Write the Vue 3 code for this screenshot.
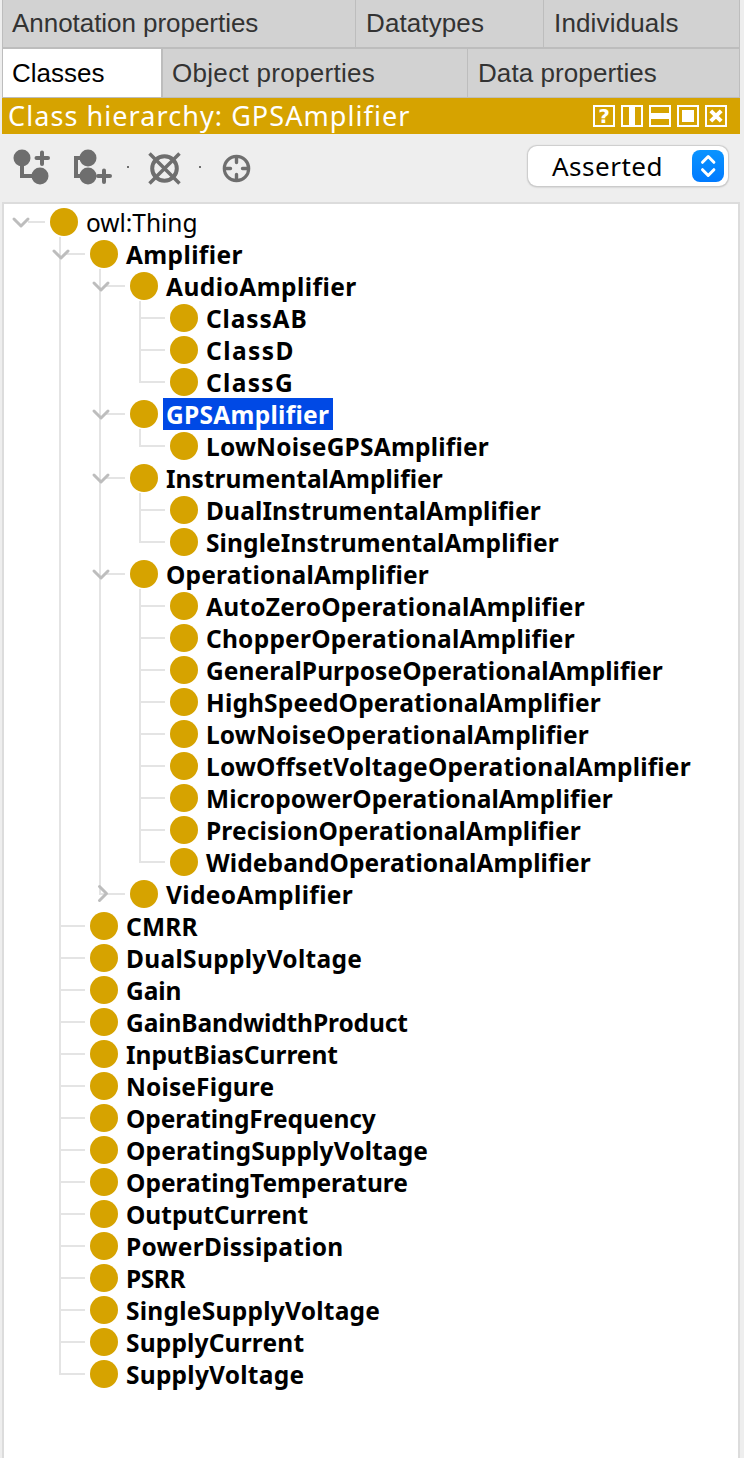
<script setup>
const canvas = document.createElement('canvas').getContext('2d')

// Letter spacing that lets a text's ink end `width` px after its origin.
function fit(text, font, width) {
  canvas.font = font
  canvas.letterSpacing = '0.01px'
  const ink = canvas.measureText(text).actualBoundingBoxRight
  return { letterSpacing: ((width - ink) / (text.length - 1)).toFixed(3) + 'px' }
}

const TAB = '26px "Liberation Sans"'
const HEAD = '27px "Noto Sans"'
const COMBO = '26px "Noto Sans"'
const REG = '24.5px "Noto Sans"'
const BOLD = 'bold 24.5px "Noto Sans"'

const topTabs = [
  { text: 'Annotation properties', cls: 'w-annotation', width: 246.5 },
  { text: 'Datatypes', cls: 'w-datatypes', width: 118 },
  { text: 'Individuals', cls: 'w-rest', width: 124.5 },
]
const lowTabs = [
  { text: 'Classes', cls: 'w-classes', width: 92.5 },
  { text: 'Object properties', cls: 'w-object', width: 203 },
  { text: 'Data properties', cls: 'w-rest', width: 179 },
]

// [depth, name, label width, state]
const source = [
  [0, 'owl:Thing', 109.5, 'open'],
  [1, 'Amplifier', 116.5, 'open'],
  [2, 'AudioAmplifier', 190.5, 'open'],
  [3, 'ClassAB', 100.5],
  [3, 'ClassD', 86.5],
  [3, 'ClassG', 85],
  [2, 'GPSAmplifier', 163, 'open'],
  [3, 'LowNoiseGPSAmplifier', 283],
  [2, 'InstrumentalAmplifier', 277, 'open'],
  [3, 'DualInstrumentalAmplifier', 335],
  [3, 'SingleInstrumentalAmplifier', 353],
  [2, 'OperationalAmplifier', 263, 'open'],
  [3, 'AutoZeroOperationalAmplifier', 379],
  [3, 'ChopperOperationalAmplifier', 369],
  [3, 'GeneralPurposeOperationalAmplifier', 457],
  [3, 'HighSpeedOperationalAmplifier', 395],
  [3, 'LowNoiseOperationalAmplifier', 383],
  [3, 'LowOffsetVoltageOperationalAmplifier', 485],
  [3, 'MicropowerOperationalAmplifier', 407],
  [3, 'PrecisionOperationalAmplifier', 375],
  [3, 'WidebandOperationalAmplifier', 385],
  [2, 'VideoAmplifier', 187, 'closed'],
  [1, 'CMRR', 72.5],
  [1, 'DualSupplyVoltage', 235.5],
  [1, 'Gain', 54.5],
  [1, 'GainBandwidthProduct', 281.5],
  [1, 'InputBiasCurrent', 211.5],
  [1, 'NoiseFigure', 147.5],
  [1, 'OperatingFrequency', 250],
  [1, 'OperatingSupplyVoltage', 301.5],
  [1, 'OperatingTemperature', 281.5],
  [1, 'OutputCurrent', 181.5],
  [1, 'PowerDissipation', 216.5],
  [1, 'PSRR', 60.5],
  [1, 'SingleSupplyVoltage', 253.5],
  [1, 'SupplyCurrent', 177.5],
  [1, 'SupplyVoltage', 177.5],
]

// True when another node at `level` follows row `i` under the same parent.
function continues(i, level) {
  for (let j = i + 1; j < source.length; j++) {
    if (source[j][0] < level) return false
    if (source[j][0] === level) return true
  }
  return false
}

const rows = source.map(([depth, name, width, state], i) => {
  let guides = ''
  for (let k = 1; k <= depth; k++) {
    const more = continues(i, k)
    if (more || k === depth) guides += `M${16 + 40 * k} 0V${more ? 32 : 17}`
  }
  if (state === 'open') guides += `M${56 + 40 * depth} 31V32`
  const x = 40 * depth
  guides += depth === 0 ? 'M24 16H41' : `M${x + (state === 'open' ? 22 : 15)} 16H${x + 41}`
  return {
    name, state, guides, x,
    size: x + 82,
    selected: name === 'GPSAmplifier',
    style: fit(name, depth ? BOLD : REG, width),
  }
})
</script>

<template>
  <main class="window">
    <nav class="tabs">
      <div class="tab-row upper">
        <div v-for="t in topTabs" :key="t.text" class="tab" :class="t.cls">
          <span :style="fit(t.text, TAB, t.width)">{{ t.text }}</span>
        </div>
      </div>
      <div class="tab-row lower">
        <div v-for="t in lowTabs" :key="t.text" class="tab" :class="t.cls">
          <span :style="fit(t.text, TAB, t.width)">{{ t.text }}</span>
        </div>
      </div>
    </nav>

    <header class="head">
      <h1 :style="fit('Class hierarchy: GPSAmplifier', HEAD, 401.5)">Class hierarchy: GPSAmplifier</h1>
      <div class="head-icons">
        <div class="box help">?</div>
        <svg class="pic" viewBox="0 0 22 22"><path class="frame" d="M1 1H21V21H1Z" /><path class="fill" d="M8 1H14V21H8Z" /></svg>
        <svg class="pic" viewBox="0 0 22 22"><path class="frame" d="M1 1H21V21H1Z" /><path class="fill" d="M1 8H21V14H1Z" /></svg>
        <svg class="pic" viewBox="0 0 22 22"><path class="frame" d="M1 1H21V21H1Z" /><path class="fill" d="M5 5H17V17H5Z" /></svg>
        <svg class="pic" viewBox="0 0 22 22"><path class="frame" d="M1 1H21V21H1Z" /><path class="cross" d="M5.8 5.8L16.2 16.2M16.2 5.8L5.8 16.2" /></svg>
      </div>
    </header>

    <section class="toolbar">
      <svg class="tools" width="250" height="68" viewBox="2 134 250 68">
        <g class="solid">
          <circle cx="22" cy="158" r="8.5" /><circle cx="40" cy="176" r="8.5" />
          <circle cx="88" cy="158" r="8.5" /><circle cx="88" cy="176" r="8.5" />
          <path d="M127 166h2v2h-2zM199 166h2v2h-2z" />
        </g>
        <g class="stroke">
          <path d="M22 160V176H38M88 158H76V176H88" />
          <path class="plus" d="M36.500 158H48M42 152.500V164M98 176H110M104 170.500V182" />
          <circle cx="164.500" cy="168.500" r="12.300" />
          <path class="thin" d="M149.500 153.500L179.500 183.500M179.500 153.500L149.500 183.500" />
          <circle class="ring" cx="236.500" cy="168.500" r="12.200" />
          <path class="ticks" d="M236.500 158V162.500M236.500 174.500V179M226 168.500H230.500M242.500 168.500H247" />
        </g>
      </svg>
      <div class="select">
        <span :style="fit('Asserted', COMBO, 108.5)">Asserted</span>
        <svg class="stepper" viewBox="0 0 32 32">
          <path d="M10.500 12.300L16.200 6.500L21.900 12.300M10.500 19.700L16.200 25.500L21.900 19.700" />
        </svg>
      </div>
    </section>

    <section class="tree">
      <div v-for="r in rows" :key="r.name" class="row">
        <svg class="branch" :width="r.size" height="32">
          <path class="guide" :d="r.guides" />
          <path v-if="r.state === 'open'" class="arrow" :d="`M${r.x + 10} 13L${r.x + 17} 20L${r.x + 24} 13`" />
          <path v-if="r.state === 'closed'" class="arrow" :d="`M${r.x + 15.500} 8.500L${r.x + 22.500} 15.500L${r.x + 15.500} 22.500`" />
          <circle class="dot" :cx="r.x + 60" cy="16" r="14" />
        </svg>
        <span class="label" :class="{ plain: r.x === 0, selected: r.selected }" :style="r.style">{{ r.name }}</span>
      </div>
    </section>
  </main>
</template>

<style>
body { background: #eee; }
</style>

<style scoped>
.window {
  box-sizing: border-box;
  width: 744px;
  height: 1458px;
  padding: 0 4px 0 2px;
  overflow: hidden;
  display: flex;
  flex-direction: column;
  background: #eee;
  font-family: "Noto Sans", "Open Sans", sans-serif;
  color: #000;
}
.tabs { font: 26px "Liberation Sans", Arial, sans-serif; color: #333; height: 98px; }
.tab-row {
  display: flex;
  box-sizing: border-box;
  border-left: 1px solid #bdbdbd;
  border-right: 1px solid #bdbdbd;
  background: #d2d2d2;
}
.upper { height: 49px; border-bottom: 2px solid #bdbdbd; line-height: 46px; }
.lower { height: 49px; border-bottom: 1px solid #bdbdbd; line-height: 48px; }
.tab { box-sizing: border-box; padding-left: 9px; border-right: 1px solid #bdbdbd; white-space: nowrap; }
.w-annotation { width: 353px; }
.w-datatypes { width: 188px; padding-left: 10px; }
.w-classes { width: 160px; background: #fff; color: #000; border-right-width: 2px; }
.w-object { width: 305px; }
.w-rest { flex: 1; border-right: 0; padding-left: 10px; }

.head {
  flex: none;
  height: 36px;
  background: #d6a300;
  color: #fff;
  display: flex;
  align-items: center;
  justify-content: space-between;
  padding: 0 13px 0 6px;
}
h1 { margin: 0; font-size: 27px; font-weight: 400; line-height: 36px; white-space: nowrap; }
.head-icons { display: flex; gap: 6px; }
.box { box-sizing: border-box; width: 22px; height: 22px; border: 2px solid #fff; }
.help { font: bold 20px/18px "DejaVu Sans", sans-serif; text-align: center; }
.pic { display: block; width: 22px; height: 22px; }
.frame { fill: none; stroke: #fff; stroke-width: 2; }
.fill { fill: #fff; }
.cross { stroke: #fff; stroke-width: 4; }

.toolbar { flex: none; height: 68px; display: flex; align-items: flex-start; justify-content: space-between; }
.tools { display: block; }
.solid { fill: #6e6e6e; }
.stroke { fill: none; stroke: #6e6e6e; stroke-width: 4; }
.plus { stroke-linecap: round; }
.thin { stroke-width: 3.5; }
.ring { stroke-width: 3.2; }
.ticks { stroke-width: 3.4; stroke-linecap: round; }
.select {
  box-sizing: border-box;
  width: 200px;
  height: 40px;
  margin: 12px 12px 0 0;
  padding: 4px 4px 4px 24px;
  display: flex;
  justify-content: space-between;
  background: #fff;
  border-radius: 9px;
  box-shadow: 0 0 1px 0.5px #ccc, 0 1px 2px #b4b4b4;
  font-size: 26px;
  line-height: 32px;
}
.stepper { display: block; width: 32px; height: 32px; border-radius: 8px; background: linear-gradient(#0a94ff, #007aff); }
.stepper path { fill: none; stroke: #fff; stroke-width: 3; stroke-linecap: round; stroke-linejoin: round; }

.tree {
  flex: 1;
  padding-top: 2px;
  background: #fff;
  border: 2px solid #dcdcdc;
  border-bottom: 0;
}
.row { display: flex; height: 32px; }
.branch { display: block; flex: none; margin-right: -3px; overflow: visible; }
.guide { fill: none; stroke: #e4e4e4; stroke-width: 2; }
.arrow { fill: none; stroke: #bdbdbd; stroke-width: 3; stroke-linecap: round; stroke-linejoin: round; }
.dot { fill: #d6a300; }
.label {
  box-sizing: border-box;
  height: 32px;
  padding: 1px 3px 0;
  font-size: 24.5px;
  font-weight: 700;
  line-height: 32px;
  white-space: nowrap;
}
.plain { font-weight: 400; }
.selected { background: #0049e5; color: #fff; padding-right: 4px; }
</style>
